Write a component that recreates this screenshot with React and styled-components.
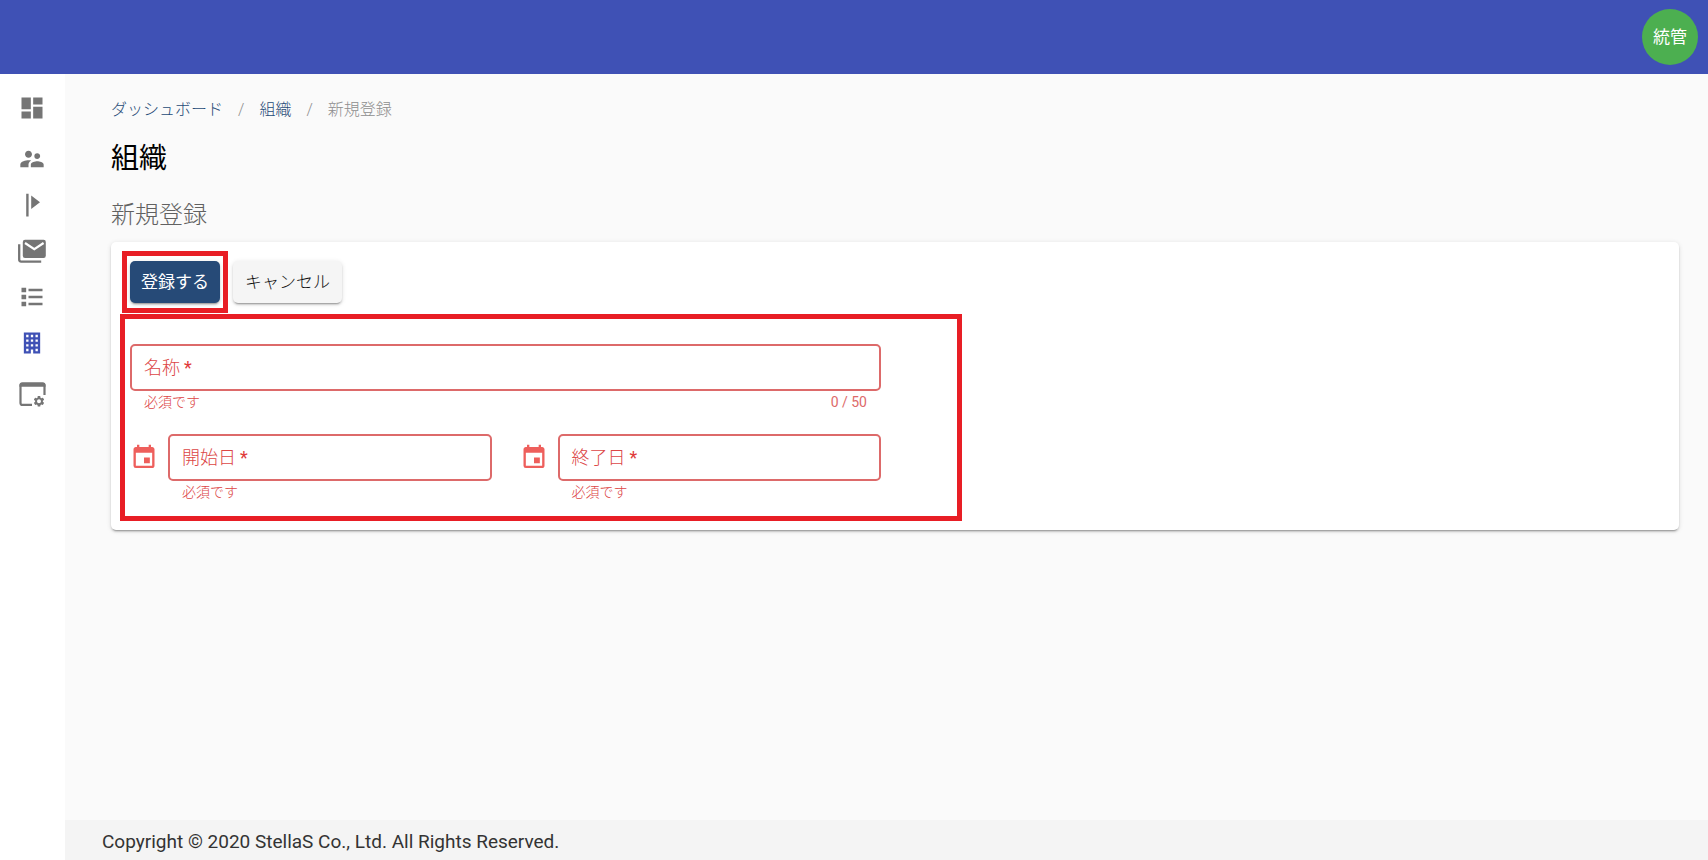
import React, { useState } from "react";
import styled, { createGlobalStyle } from "styled-components";
import { MdDashboard, MdSupervisorAccount, MdEvent, MdSettings } from "react-icons/md";

const GlobalStyle = createGlobalStyle`
  * {
    box-sizing: border-box;
  }

  body {
    margin: 0;
    color: #212121;
    background: #fafafa;
    font-family: Roboto, "Noto Sans CJK JP", sans-serif;
    font-size: 16px;
  }
`;

const Page = styled.div`
  min-height: 100vh;
  display: flex;
  flex-direction: column;
`;

const Header = styled.header`
  height: 74px;
  padding: 0 10px;
  display: flex;
  justify-content: flex-end;
  align-items: center;
  background: #3f51b5;
`;

const Avatar = styled.button`
  width: 56px;
  height: 56px;
  padding: 0 0 4px;
  border: none;
  border-radius: 50%;
  color: #ffffff;
  background: #4caf50;
  font-family: inherit;
  font-size: 17px;
  cursor: pointer;
`;

const Body = styled.div`
  flex: 1;
  display: flex;
`;

const Sidebar = styled.nav`
  width: 65px;
  flex-shrink: 0;
  padding: 11px 1px 0 0;
  display: flex;
  flex-direction: column;
  gap: 5px;
  background: #ffffff;
`;

const NavGroup = styled.div`
  display: flex;
  flex-direction: column;
`;

const NavItem = styled.a`
  height: 46px;
  display: flex;
  justify-content: center;
  align-items: center;
  color: ${(props) => (props.$active ? "#3f51b5" : "#757575")};

  svg {
    width: 28px;
    height: 28px;
    display: block;
  }
`;

const Content = styled.div`
  flex: 1;
  min-width: 0;
  display: flex;
  flex-direction: column;
`;

const Main = styled.main`
  flex: 1;
  padding: 24px 29px 24px 46px;
`;

const Breadcrumbs = styled.ol`
  margin: 0;
  padding: 0;
  display: flex;
  list-style: none;
  line-height: 24px;
  font-weight: 300;
`;

const Crumb = styled.li`
  color: #8e8e8e;

  & + &::before {
    content: "/";
    padding: 0 15px;
  }

  a {
    color: #264a77;
    text-decoration: none;
  }
`;

const Title = styled.h1`
  margin: 16px 0 0;
  color: #000000;
  font-size: 28px;
  font-weight: 400;
  line-height: 42px;
`;

const Subtitle = styled.h2`
  margin: 18px 0 0;
  color: #616161;
  font-size: 24px;
  font-weight: 300;
  line-height: 34px;
`;

const Card = styled.section`
  margin-top: 10px;
  padding: 9px;
  border-radius: 5px;
  background: #ffffff;
  box-shadow: 0 3px 1px -2px rgba(0, 0, 0, 0.2), 0 2px 2px rgba(0, 0, 0, 0.14),
    0 1px 5px rgba(0, 0, 0, 0.12);
`;

const Actions = styled.div`
  padding-left: 2px;
  display: flex;
  align-items: center;
  gap: 5px;
`;

const Highlight = styled.div`
  padding: 5px 3px;
  border: 5px solid #e81e25;
`;

const Button = styled.button`
  height: 42px;
  padding: 0 ${(props) => (props.$primary ? 11 : 12)}px 4px;
  display: block;
  border: none;
  border-radius: 5px;
  color: ${(props) => (props.$primary ? "#ffffff" : "#111111")};
  background: ${(props) => (props.$primary ? "#264a77" : "#f5f5f5")};
  box-shadow: 0 3px 1px -2px rgba(0, 0, 0, 0.2), 0 2px 2px rgba(0, 0, 0, 0.14),
    0 1px 5px rgba(0, 0, 0, 0.12);
  font-family: inherit;
  font-size: 17px;
  font-weight: ${(props) => (props.$primary ? 400 : 300)};
  cursor: pointer;
`;

const FormArea = styled.div`
  max-width: 842px;
  margin-top: 1px;
  padding: 25px 76px 13px 5px;
  display: flex;
  flex-direction: column;
  gap: 21px;
  border: 5px solid #e81e25;
`;

const DateRow = styled.div`
  display: grid;
  grid-template-columns: repeat(2, minmax(0, 1fr));
  gap: 28px;
`;

const DateCell = styled.div`
  display: flex;
  gap: 10px;

  > svg {
    width: 28px;
    height: 47px;
    flex-shrink: 0;
    color: #ee5f5c;
  }
`;

const Field = styled.div`
  flex: 1;
  min-width: 0;
`;

const FieldBox = styled.div`
  height: 47px;
  padding: 0 12px 3px;
  display: flex;
  align-items: center;
  gap: 8px;
  border: 2px solid #dd6a6a;
  border-radius: 5px;
`;

const Label = styled.label`
  color: #dc4646;
  font-size: 18px;
  font-weight: 300;
  white-space: nowrap;

  span {
    margin-left: 4px;
    color: #e03a3a;
    font-weight: 400;
  }
`;

const Input = styled.input`
  flex: 1;
  min-width: 0;
  padding: 0;
  border: none;
  outline: none;
  color: #212121;
  background: transparent;
  font-family: inherit;
  font-size: 18px;
`;

const Details = styled.div`
  padding: 0 14px;
  display: flex;
  justify-content: space-between;
  color: #dc4646;
  font-size: 14px;
  font-weight: 300;
  line-height: 22px;
`;

const Counter = styled.span`
  color: #dd6a6a;
  font-weight: 400;
`;

const Footer = styled.footer`
  height: 40px;
  padding: 2px 37px 0;
  display: flex;
  align-items: center;
  background: #f4f4f4;
  color: #333333;
  font-size: 19px;
`;

const FlagIcon = () => (
  <svg viewBox="0 0 28 28" fill="currentColor">
    <path d="M8.2 2.8h2.4v22.7H8.2zM13.2 4.6l8.8 6.6-8.8 6.8z" />
  </svg>
);

const MailsIcon = () => (
  <svg viewBox="0 0 28 28" fill="none">
    <rect x="4.8" y="2.8" width="23" height="18.2" rx="2.2" fill="currentColor" />
    <path d="M7 6l9.3 6.2L25.6 6" stroke="#ffffff" strokeWidth="2.2" />
    <path d="M1.2 7.2v15.4q0 2 2 2h20" stroke="currentColor" strokeWidth="2.3" />
  </svg>
);

const ListIcon = () => (
  <svg viewBox="0 0 24 24" fill="currentColor">
    <path d="M3 4h4v4H3zM9 5h12v2H9zM3 10h4v4H3zM9 11h12v2H9zM3 16h4v4H3zM9 17h12v2H9z" />
  </svg>
);

const BuildingIcon = () => (
  <svg viewBox="0 0 24 24" fill="currentColor">
    <path d="M5 3v18h6v-3.500h2V21h6V3H5m2 2h2v2H7V5m4 0h2v2h-2V5m4 0h2v2h-2V5M7 9h2v2H7V9m4 0h2v2h-2V9m4 0h2v2h-2V9m-8 4h2v2H7v-2m4 0h2v2h-2v-2m4 0h2v2h-2v-2m-8 4h2v2H7v-2m8 0h2v2h-2v-2z" />
  </svg>
);

const WindowCogIcon = () => (
  <svg viewBox="0 0 28 28" fill="none">
    <path d="M14 24.900H4.500q-2 0-2-2V5.500q0-2 2-2h20q2 0 2 2v9.500" stroke="currentColor" strokeWidth="2.2" />
    <path d="M1.500 6.800V4.700q0-2.300 2.300-2.300h21.400q2.300 0 2.300 2.300v2.100z" fill="currentColor" />
    <MdSettings x="14.5" y="14.8" style={{ width: 13, height: 13 }} />
  </svg>
);

const navGroups = [
  [{ label: "ダッシュボード", icon: MdDashboard }],
  [
    { label: "ユーザー", icon: MdSupervisorAccount },
    { label: "フラグ", icon: FlagIcon },
    { label: "メール", icon: MailsIcon },
    { label: "一覧", icon: ListIcon },
    { label: "組織", icon: BuildingIcon, active: true },
  ],
  [{ label: "設定", icon: WindowCogIcon }],
];

const TextField = ({ id, label, max }) => {
  const [value, setValue] = useState("");

  return (
    <Field>
      <FieldBox>
        <Label htmlFor={id}>
          {label}
          <span>*</span>
        </Label>
        <Input
          id={id}
          type="text"
          value={value}
          maxLength={max}
          required
          aria-describedby={`${id}-error`}
          onChange={(e) => setValue(e.target.value)}
        />
      </FieldBox>
      <Details>
        <span id={`${id}-error`}>必須です</span>
        {max && (
          <Counter>
            {value.length} / {max}
          </Counter>
        )}
      </Details>
    </Field>
  );
};

const App = () => {
  return (
    <Page>
      <GlobalStyle />
      <Header>
        <Avatar type="button">統管</Avatar>
      </Header>

      <Body>
        <Sidebar>
          {navGroups.map((group, i) => (
            <NavGroup key={i}>
              {group.map(({ label, icon: Icon, active }) => (
                <NavItem key={label} href="#" aria-label={label} $active={active}>
                  <Icon />
                </NavItem>
              ))}
            </NavGroup>
          ))}
        </Sidebar>

        <Content>
          <Main>
            <Breadcrumbs>
              <Crumb>
                <a href="#">ダッシュボード</a>
              </Crumb>
              <Crumb>
                <a href="#">組織</a>
              </Crumb>
              <Crumb>新規登録</Crumb>
            </Breadcrumbs>
            <Title>組織</Title>
            <Subtitle>新規登録</Subtitle>

            <Card>
              <Actions>
                <Highlight>
                  <Button type="button" $primary>
                    登録する
                  </Button>
                </Highlight>
                <Button type="button">キャンセル</Button>
              </Actions>

              <FormArea>
                <TextField id="name" label="名称" max={50} />
                <DateRow>
                  <DateCell>
                    <MdEvent />
                    <TextField id="start" label="開始日" />
                  </DateCell>
                  <DateCell>
                    <MdEvent />
                    <TextField id="end" label="終了日" />
                  </DateCell>
                </DateRow>
              </FormArea>
            </Card>
          </Main>

          <Footer>Copyright © 2020 StellaS Co., Ltd. All Rights Reserved.</Footer>
        </Content>
      </Body>
    </Page>
  );
};

export default App;
